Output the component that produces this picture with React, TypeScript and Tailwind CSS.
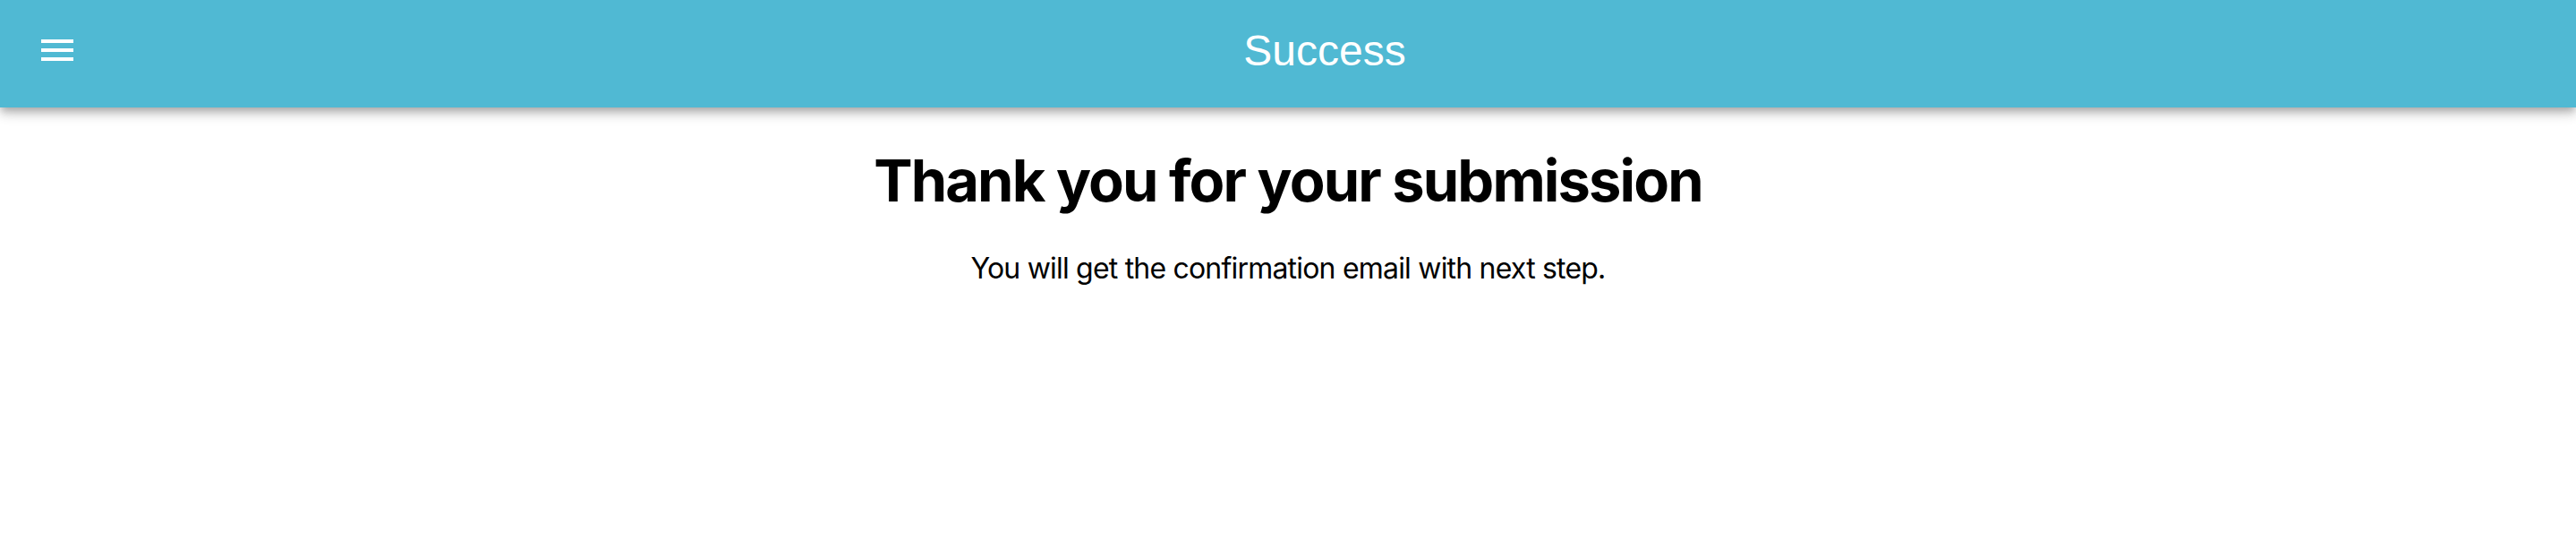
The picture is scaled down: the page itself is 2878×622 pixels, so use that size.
export default function App() {
  return (
    <div className="min-h-[622px] bg-white" style={{ fontFamily: "Inter, 'Liberation Sans', sans-serif" }}>
      <header className="flex h-[120px] items-start bg-[#50b9d3] shadow-[0_4px_8px_-2px_rgba(0,0,0,0.2),0_8px_10px_0_rgba(0,0,0,0.14),0_2px_20px_0_rgba(0,0,0,0.12)]">
        <button className="ml-[40px] mt-[32px] h-[48px] w-[48px] text-white" aria-label="menu">
          <svg viewBox="0 0 24 24" width="48" height="48" fill="currentColor">
            <path d="M3 18h18v-2H3v2zm0-5h18v-2H3v2zm0-7v2h18V6H3z" />
          </svg>
        </button>
        <div className="mr-[6px] flex-1 pt-[33px] text-center text-[48px] leading-[48px] text-white [font-family:'Liberation_Sans',Arial,sans-serif]">
          Success
        </div>
      </header>
      <main className="flex flex-col items-center">
        <h1 className="mt-[49px] text-[65px] font-bold leading-[65px] tracking-[-1.9px] text-black">
          Thank you for your submission
        </h1>
        <p className="mt-[50px] text-[32px] leading-[32px] tracking-[-0.8px] text-black">
          You will get the confirmation email with next step.
        </p>
      </main>
    </div>
  );
}
